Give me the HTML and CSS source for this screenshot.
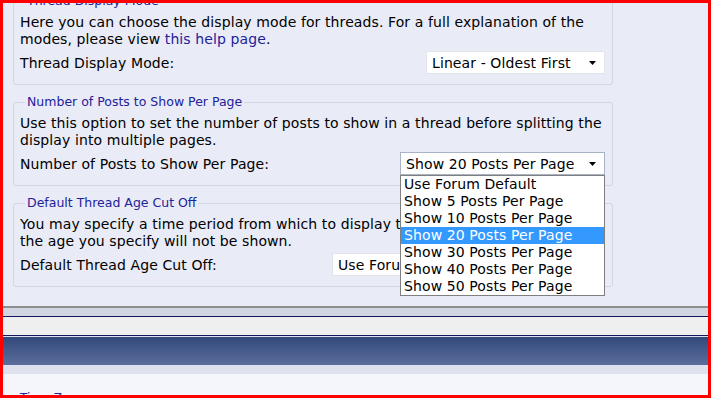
FILE: index.html
```html
<!DOCTYPE html>
<html lang="en">
<head>
    <meta charset="UTF-8">
    <title>Thread Display Options</title>
    <link rel="stylesheet" href="styles.css">
</head>
<body>
    <div class="frame">
        <div class="panel">
            <fieldset class="first">
                <legend>Thread Display Mode</legend>
                <div class="desc">Here you can choose the display mode for threads. For a full explanation of the modes, please view <a href="#">this help page</a>.</div>
                <div class="row">
                    <span>Thread Display Mode:</span>
                    <div class="select mode">
                        <span>Linear - Oldest First</span>
                        <svg width="7" height="4" viewBox="0 0 7 4"><path d="M0 0h7L3.5 4z" fill="#000"/></svg>
                    </div>
                </div>
            </fieldset>

            <fieldset>
                <legend>Number of Posts to Show Per Page</legend>
                <div class="desc">Use this option to set the number of posts to show in a thread before splitting the display into multiple pages.</div>
                <div class="row">
                    <span>Number of Posts to Show Per Page:</span>
                    <div class="select posts open">
                        <span>Show 20 Posts Per Page</span>
                        <svg width="7" height="4" viewBox="0 0 7 4"><path d="M0 0h7L3.5 4z" fill="#000"/></svg>
                        <ul class="options">
                            <li>Use Forum Default</li>
                            <li>Show 5 Posts Per Page</li>
                            <li>Show 10 Posts Per Page</li>
                            <li class="active">Show 20 Posts Per Page</li>
                            <li>Show 30 Posts Per Page</li>
                            <li>Show 40 Posts Per Page</li>
                            <li>Show 50 Posts Per Page</li>
                        </ul>
                    </div>
                </div>
            </fieldset>

            <fieldset>
                <legend>Default Thread Age Cut Off</legend>
                <div class="desc">You may specify a time period from which to display threads. Threads older than the age you specify will not be shown.</div>
                <div class="row">
                    <span>Default Thread Age Cut Off:</span>
                    <div class="select age">
                        <span>Use Forum Default</span>
                        <svg width="7" height="4" viewBox="0 0 7 4"><path d="M0 0h7L3.5 4z" fill="#000"/></svg>
                    </div>
                </div>
            </fieldset>
        </div>

        <div class="rule"></div>
        <div class="band-grey"></div>
        <div class="band-light"></div>
        <div class="band-blue"></div>
        <div class="band-pale"></div>
        <div class="next">
            <div class="next-title">Time Zone</div>
        </div>
    </div>
</body>
</html>
```

FILE: styles.css
```css
body {
    margin: 0;
    font-family: "DejaVu Sans", Verdana, sans-serif;
    font-size: 14px;
    letter-spacing: 0.1px;
    color: #000;
}
.frame {
    width: 711px;
    height: 398px;
    box-sizing: border-box;
    border: 3px solid #f00;
    overflow: hidden;
    background: #f5f6fc;
}
.panel {
    background: #e9ebf6;
    padding: 0 95px 19px 10px;
}
fieldset {
    margin: 10px 0 0;
    padding: 6px 7px 10px 6px;
    border: 1px solid #d3d6e2;
    border-radius: 3px;
}
fieldset.first {
    margin-top: -9px;
}
legend {
    margin-left: 5px;
    padding: 0 2px;
    font-size: 12.5px;
    letter-spacing: 0;
    line-height: 14px;
    color: #22229a;
}
.desc {
    line-height: 17px;
}
.desc a {
    color: #22229a;
    text-decoration: none;
}
.row {
    display: flex;
    justify-content: space-between;
    align-items: center;
    margin-top: 3px;
}
.select {
    position: relative;
    height: 23px;
    box-sizing: border-box;
    display: flex;
    align-items: center;
    justify-content: space-between;
    padding: 0 8px 0 5px;
    background: #fff;
    border: 1px solid #e2e4ec;
}
.select svg {
    display: block;
}
.select.mode {
    width: 179px;
}
.select.posts {
    width: 205px;
    border-color: #a9b3c6;
}
.select.age {
    width: 273px;
}
.options {
    position: absolute;
    top: calc(100% + 1px);
    left: -1px;
    width: 205px;
    box-sizing: border-box;
    margin: 0;
    padding: 0;
    list-style: none;
    background: #fff;
    border: 1px solid #7f7f7f;
    z-index: 2;
}
.options li {
    padding-left: 3px;
    line-height: 17px;
}
.options li.active {
    background: #3399ff;
    color: #fff;
}
.rule {
    height: 2px;
    background: #8e8e8e;
}
.band-grey {
    height: 8px;
    background: #d1d5e2;
    border-bottom: 1px solid #17175e;
}
.band-light {
    height: 18px;
    background: #efefef;
    border-bottom: 1px solid #17175e;
}
.band-blue {
    height: 28px;
    border-top: 1px solid #dfe2ee;
    background: linear-gradient(#33497b, #5b6e9b);
}
.band-pale {
    height: 9px;
    background: #dfe2ee;
}
.next {
    padding: 17px 0 0 17px;
}
.next-title {
    font-size: 12px;
    color: #22229a;
}
```
